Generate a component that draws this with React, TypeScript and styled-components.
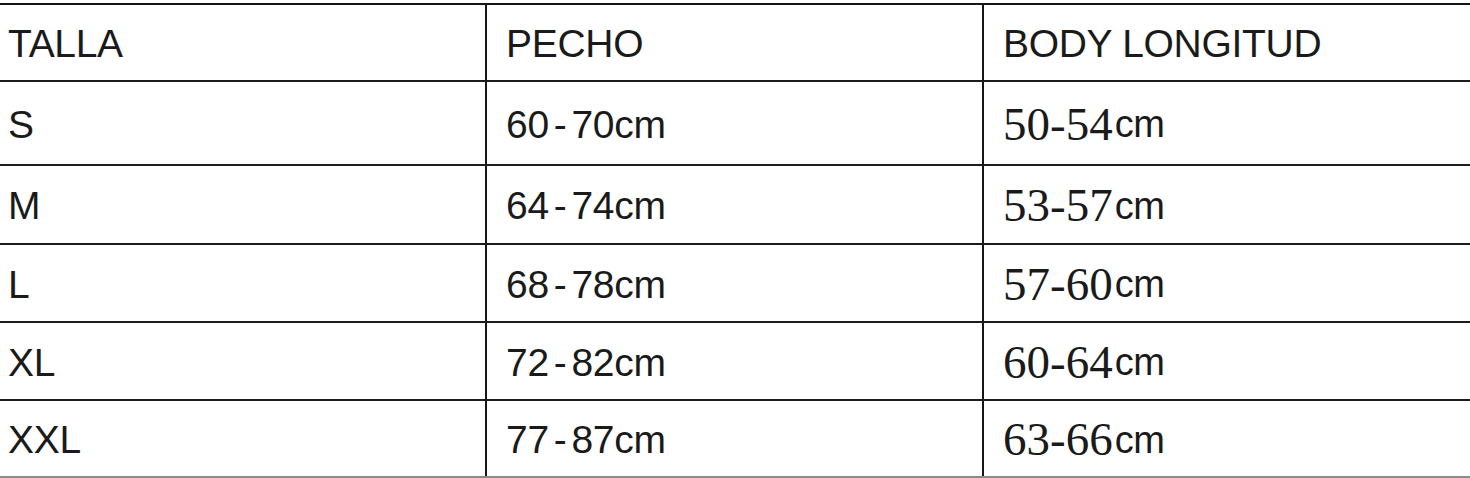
import React from 'react';
import styled, { createGlobalStyle } from 'styled-components';

const GlobalStyle = createGlobalStyle`
  html, body {
    margin: 0;
    padding: 0;
    background: #fff;
  }
  body {
    font-family: "Liberation Sans", Arial, sans-serif;
    color: #1a1a1a;
  }
`;

const Page = styled.div`
  width: 1470px;
  height: 478px;
  padding-top: 3px;
  box-sizing: border-box;
  overflow: hidden;
`;

const Table = styled.div`
  border-top: 2px solid #161616;
`;

const Row = styled.div<{ $height: number; $last?: boolean }>`
  display: grid;
  grid-template-columns: 487px 497px 1fr;
  height: ${(p) => p.$height}px;
  border-bottom: 2px solid ${(p) => (p.$last ? '#8a8a8a' : '#1c1c1c')};
`;

const Cell = styled.div<{ $pad: number; $divider?: boolean }>`
  display: flex;
  align-items: center;
  padding-left: ${(p) => p.$pad}px;
  padding-top: 2px;
  border-right: ${(p) => (p.$divider ? '2px solid #161616' : 'none')};
  font-size: 39px;
  line-height: 1;
  white-space: nowrap;
  letter-spacing: -0.3px;
`;

const Dash = styled.span`
  margin: 0 5px;
`;

const SerifNum = styled.span`
  font-family: "Liberation Serif", "Times New Roman", serif;
  font-size: 47px;
  letter-spacing: 0;
`;

const Unit = styled.span`
  font-size: 38px;
  margin-left: 2px;
`;

type SizeRow = { talla: string; pecho: [string, string]; body: string; h: number };

const rows: SizeRow[] = [
  { talla: 'S', pecho: ['60', '70'], body: '50-54', h: 82 },
  { talla: 'M', pecho: ['64', '74'], body: '53-57', h: 77 },
  { talla: 'L', pecho: ['68', '78'], body: '57-60', h: 76 },
  { talla: 'XL', pecho: ['72', '82'], body: '60-64', h: 76 },
  { talla: 'XXL', pecho: ['77', '87'], body: '63-66', h: 75 },
];

const App: React.FC = () => {
  return (
    <Page>
      <GlobalStyle />
      <Table>
        <Row $height={75}>
          <Cell $pad={8} $divider>TALLA</Cell>
          <Cell $pad={19} $divider>PECHO</Cell>
          <Cell $pad={19}>BODY LONGITUD</Cell>
        </Row>
        {rows.map((r, i) => (
          <Row key={r.talla} $height={r.h} $last={i === rows.length - 1}>
            <Cell $pad={8} $divider>{r.talla}</Cell>
            <Cell $pad={19} $divider>
              {r.pecho[0]}
              <Dash>-</Dash>
              {r.pecho[1]}cm
            </Cell>
            <Cell $pad={19}>
              <SerifNum>{r.body}</SerifNum>
              <Unit>cm</Unit>
            </Cell>
          </Row>
        ))}
      </Table>
    </Page>
  );
};

export default App;
